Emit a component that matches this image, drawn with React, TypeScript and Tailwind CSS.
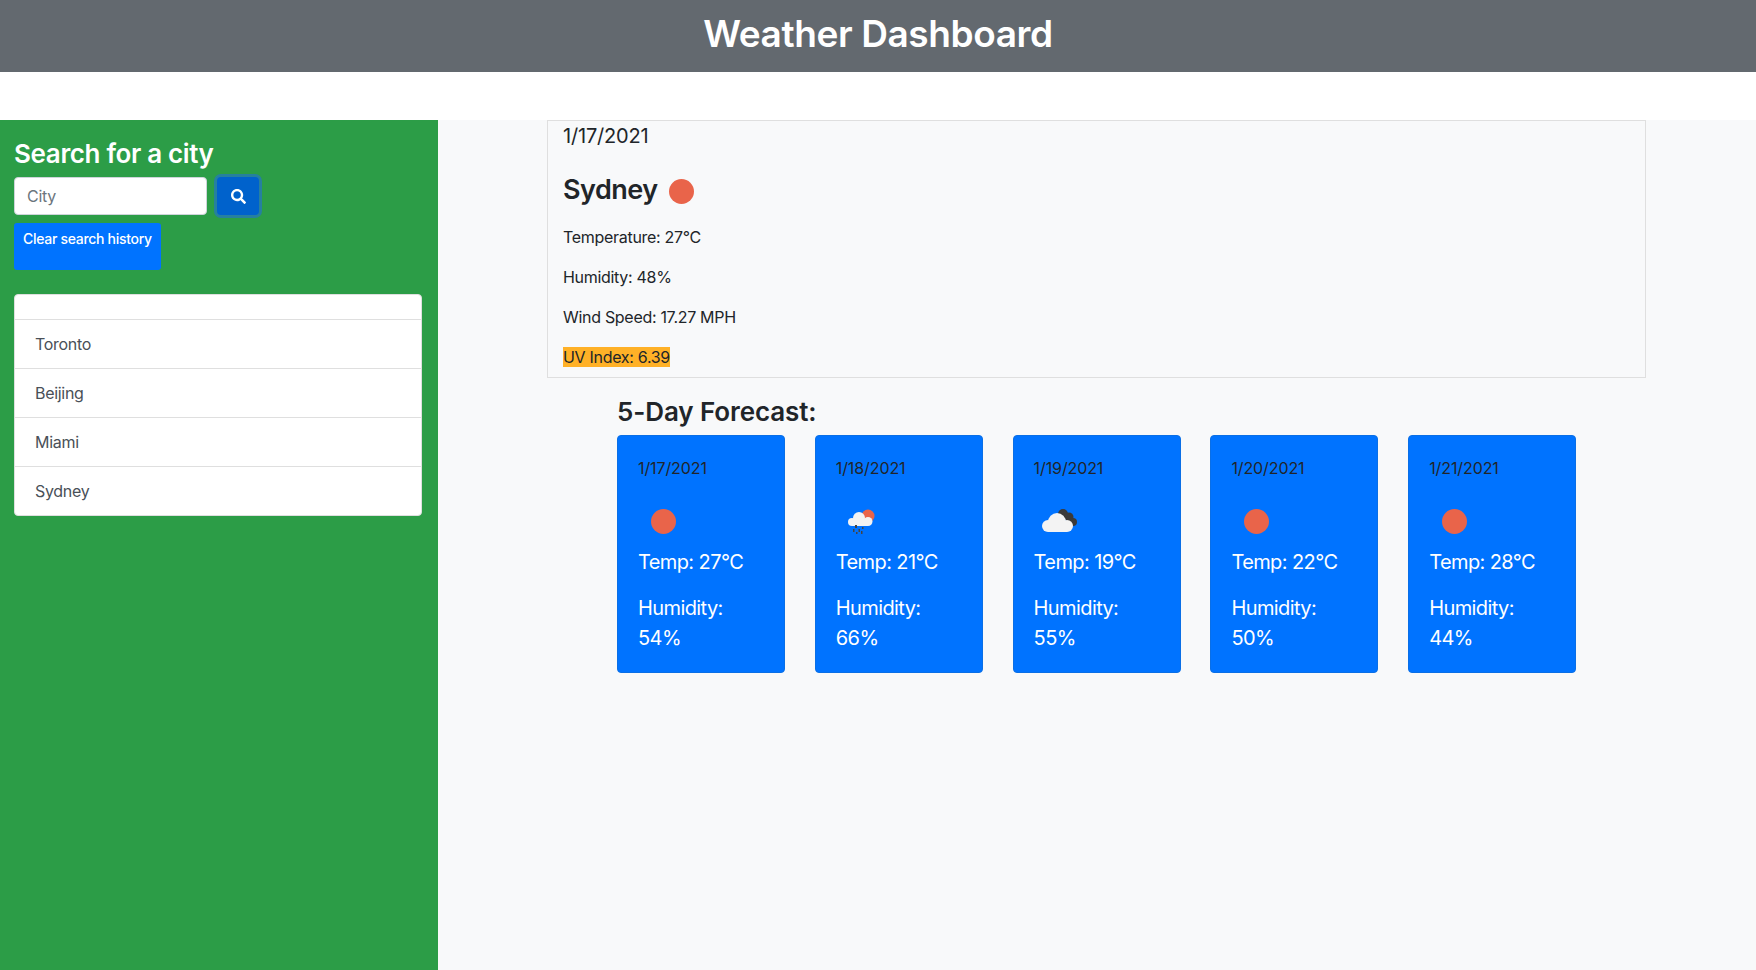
import { FaSearch } from "react-icons/fa";

const cities = ["Toronto", "Beijing", "Miami", "Sydney"];

const forecast = [
  { date: "1/17/2021", icon: "sun", temp: 27, humidity: 54 },
  { date: "1/18/2021", icon: "rain", temp: 21, humidity: 66 },
  { date: "1/19/2021", icon: "cloud", temp: 19, humidity: 55 },
  { date: "1/20/2021", icon: "sun", temp: 22, humidity: 50 },
  { date: "1/21/2021", icon: "sun", temp: 28, humidity: 44 },
];

function Sun() {
  return <div className="w-[25px] h-[25px] rounded-full bg-[#e9644a]" />;
}

function WeatherIcon({ icon }: { icon: string }) {
  if (icon === "rain") {
    return (
      <svg width="50" height="50" viewBox="0 0 50 50">
        <circle cx="32" cy="20" r="6.500" fill="#e9644a" />
        <g fill="#f3f3f3">
          <circle cx="16" cy="26" r="4" />
          <circle cx="23" cy="22" r="6" />
          <circle cx="32" cy="25.500" r="4.500" />
          <rect x="16" y="24" width="16" height="6" />
        </g>
        <g fill="#444">
          <rect x="19" y="29" width="2" height="3" />
          <rect x="22.500" y="33" width="1.500" height="3" />
          <rect x="17" y="33" width="1.500" height="3" />
          <rect x="26" y="31" width="1.500" height="2" />
          <rect x="20" y="36" width="1.500" height="2" />
          <rect x="25" y="35" width="1.500" height="3" />
        </g>
      </svg>
    );
  }
  if (icon === "cloud") {
    return (
      <svg width="50" height="50" viewBox="0 0 50 50">
        <g fill="#3a3a3a">
          <circle cx="29" cy="18" r="5" />
          <circle cx="35" cy="21" r="4.500" />
          <circle cx="39" cy="26" r="4" />
        </g>
        <g fill="#f3f3f3">
          <circle cx="14" cy="30" r="6" />
          <circle cx="23" cy="26" r="9" />
          <circle cx="33" cy="30" r="6" />
          <rect x="14" y="28" width="19" height="8" />
        </g>
      </svg>
    );
  }
  return (
    <div className="w-[50px] h-[50px] flex items-center justify-center">
      <Sun />
    </div>
  );
}

export default function App() {
  return (
    <div className="min-h-[970px] bg-white text-[16px] tracking-[-0.3px] text-[#212529] font-['Inter',_'Liberation_Sans',sans-serif]">
      <header className="h-[72px] bg-[#63696f] flex items-center justify-center pb-[4px]">
        <h1 className="text-[37px] tracking-[-0.4px] font-semibold text-white">Weather Dashboard</h1>
      </header>

      <div className="mt-[48px] flex h-[850px]">
        {/* Sidebar */}
        <aside className="w-[438px] shrink-0 bg-[#2c9d47] px-[14px] pt-[18px]">
          <h2 className="text-[26px] leading-[31px] tracking-[-0.35px] font-semibold text-white">Search for a city</h2>
          <div className="mt-[8px] flex items-center gap-[10px]">
            <input
              placeholder="City"
              className="w-[193px] h-[38px] px-[12px] rounded-[4px] border border-[#ced4da] bg-white text-[16px] placeholder:text-[#6c757d]"
            />
            <button className="w-[42px] h-[38px] rounded-[4px] bg-[#0062cc] ring-[3px] ring-[#26809f] flex items-center justify-center text-white">
              <FaSearch size={15} />
            </button>
          </div>
          <button className="mt-[8px] flex items-start w-[147px] h-[47px] rounded-[3px] bg-[#0073ff] pl-[9px] pt-[6px] text-[14px] leading-[20px] tracking-[-0.3px] font-medium whitespace-nowrap text-white">
            Clear search history
          </button>
          <ul className="mt-[24px] w-[408px] rounded-[4px] border border-[#dfdfdf] bg-white text-[#495057]">
            <li className="h-[24px]" />
            {cities.map((city) => (
              <li key={city} className="h-[49px] border-t border-[#dfdfdf] px-[20px] flex items-center">
                {city}
              </li>
            ))}
          </ul>
        </aside>

        {/* Main */}
        <main className="flex-1 bg-[#f8f9fa] pl-[109px]">
          <section className="w-[1099px] h-[258px] border border-[#dfdfdf] px-[15px]">
            <div className="text-[20px] leading-[30px] tracking-[-0.2px]">1/17/2021</div>
            <div className="mt-[20px] flex items-center gap-[11px]">
              <h2 className="text-[27px] leading-[38px] tracking-[-0.5px] font-semibold">Sydney</h2>
              <div className="pt-[2px]">
                <Sun />
              </div>
            </div>
            <p className="mt-[16px] leading-[24px]">Temperature: 27°C</p>
            <p className="mt-[16px] leading-[24px]">Humidity: 48%</p>
            <p className="mt-[16px] leading-[24px]">Wind Speed: 17.27 MPH</p>
            <p className="mt-[16px] leading-[24px]">
              <span className="bg-[#ffb127]">UV Index: 6.39</span>
            </p>
          </section>

          <h3 className="ml-[70px] mt-[17px] text-[26px] leading-[34px] tracking-[-0.1px] font-semibold">5-Day Forecast:</h3>
          <div className="ml-[70px] mt-[6px] flex gap-[29.800px]">
            {forecast.map((day) => (
              <div
                key={day.date}
                className="w-[168px] h-[238px] rounded-[4px] border border-[#0a6fe6] bg-[#0073ff] px-[20px] pt-[20px]"
              >
                <div className="leading-[24px] tracking-[-0.1px]">{day.date}</div>
                <div className="mt-[16px] h-[50px]">
                  <WeatherIcon icon={day.icon} />
                </div>
                <p className="mt-[1px] text-[20px] leading-[30px] tracking-[-0.6px] text-white">Temp: {day.temp}°C</p>
                <p className="mt-[16px] text-[20px] leading-[30px] tracking-[-0.6px] text-white">
                  Humidity: <br />
                  {day.humidity}%
                </p>
              </div>
            ))}
          </div>
        </main>
      </div>
    </div>
  );
}
